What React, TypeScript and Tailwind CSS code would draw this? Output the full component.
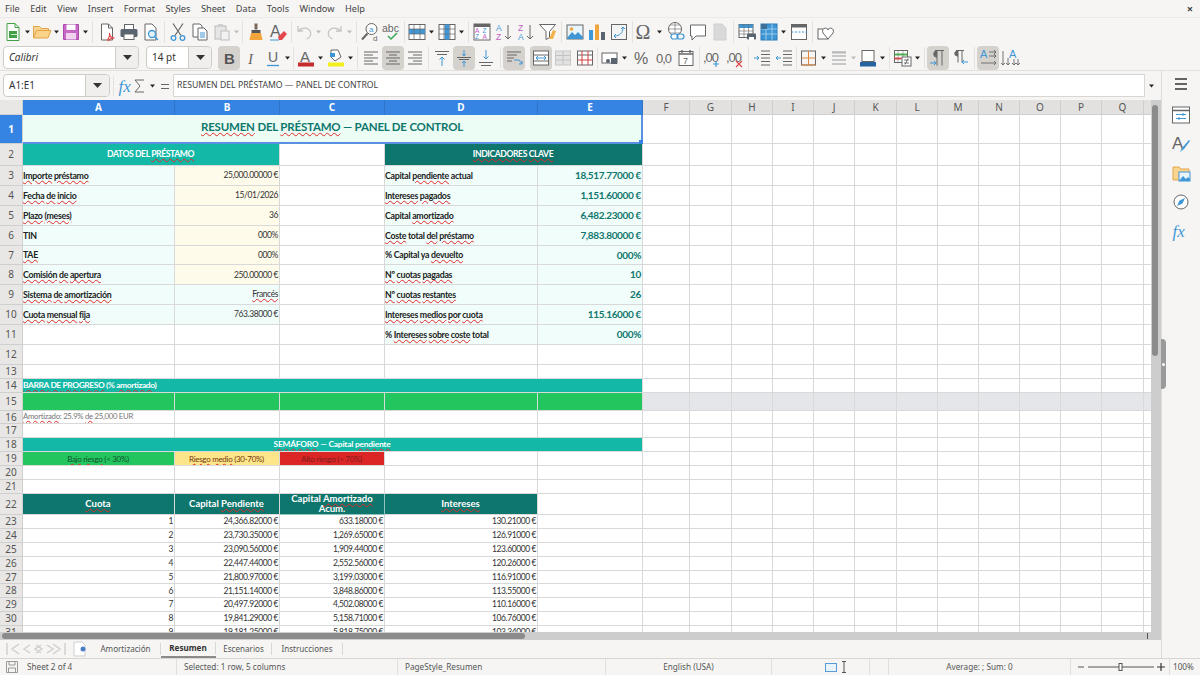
import type { ReactNode } from "react";

const dk = "#666666";
const bl = "#3f97d6";

const icons: Record<string, ReactNode> = {
  new: (<><path d="M5 2.500h8l4 4v13H5z" fill="#fff" stroke="#43a047" /><path d="M13 2.500v4h4" fill="none" stroke="#43a047" /><rect x="7" y="10" width="8" height="7" fill="#43a047" /><path d="M9 13.500h7" stroke="#c8e6c9" /></>),
  open: (<><path d="M2.500 17V5.500h6l2 2h7V10" fill="#f9d48f" stroke="#e2a54a" /><path d="M2.500 17l3-7.500H20L17 17z" fill="#fbd28a" stroke="#e2a54a" /></>),
  save: (<><path d="M3.500 3.500h15v15h-15z" fill="#c768c7" stroke="#a94ca9" /><rect x="6.500" y="3.500" width="9" height="5.500" fill="#fff" /><rect x="6" y="12" width="10" height="6.500" fill="#f1d3f1" /></>),
  pdf: (<><path d="M5.500 3h7l4 4v12h-11z" fill="#fff" stroke={dk} /><path d="M12.500 3v4h4" fill="none" stroke={dk} /><path d="M11 19c2-1 3-5 2.500-7 0 3 2 5 5 5-3 0-5 1-6.500 3" fill="none" stroke="#e04848" strokeWidth="1.200" /></>),
  print: (<><rect x="6.500" y="3.500" width="9" height="5" fill="#fff" stroke={dk} /><rect x="2.500" y="8" width="17" height="8" rx="1.500" fill="#5a6470" /><rect x="6" y="13" width="10" height="5.500" fill="#fff" stroke={dk} /></>),
  preview: (<><path d="M5 3h7l4 4v12H5z" fill="#fff" stroke={dk} /><circle cx="12" cy="13" r="3.500" fill="#e4f2fb" stroke={bl} strokeWidth="1.300" /><path d="M14.500 15.500l3.500 3.500" stroke={bl} strokeWidth="1.500" /></>),
  cut: (<><path d="M6 2.500l8 12M16 2.500l-8 12" stroke={dk} strokeWidth="1.200" /><circle cx="6.500" cy="17" r="2.300" fill="none" stroke={bl} strokeWidth="1.300" /><circle cx="15.500" cy="17" r="2.300" fill="none" stroke={bl} strokeWidth="1.300" /></>),
  copy: (<><path d="M4 3h7l2 2v11H4z" fill="#fff" stroke={dk} /><path d="M9 7h6l3 3v9H9z" fill="#fff" stroke={dk} /><path d="M11 12h5M11 14h5M11 16h5" stroke={bl} /></>),
  paste: (<><rect x="4" y="5" width="11" height="13" fill="#e6e6e6" stroke="#b9b9b9" /><rect x="7" y="3" width="5" height="3" fill="#cfcfcf" /><rect x="10" y="10" width="8" height="9" fill="#f2f2f2" stroke="#bdbdbd" /></>),
  clone: (<><path d="M9.500 2.500h3v6h-3z" fill="#7a6a5a" /><path d="M6.500 9h9v3h-9z" fill="#555" /><path d="M6 12h10l1.500 7h-13z" fill="#f3a43c" /></>),
  clear: (<><text x="3" y="16" fontSize="16" fill={dk} fontFamily="'Liberation Sans'">A</text><path d="M11 16l6-6 3 3-5 6h-3z" fill="#e4484d" /><path d="M3 19h9" stroke={bl} /></>),
  undo: (<path d="M5 5v5h5M5.500 10c3-4 10-4 12 1 1 3-1 6-4 7" fill="none" stroke="#c4c4c4" strokeWidth="1.300" />),
  redo: (<path d="M17 5v5h-5M16.500 10c-3-4-10-4-12 1-1 3 1 6 4 7" fill="none" stroke="#c4c4c4" strokeWidth="1.300" />),
  find: (<><circle cx="12.500" cy="8" r="5.500" fill="#fff" stroke={dk} /><path d="M8.500 12.500L3 18.500" stroke={dk} strokeWidth="2" /><text x="10" y="10.500" fontSize="8" fill={bl} fontFamily="'Liberation Sans'">a</text><text x="14" y="20" fontSize="8" fill={dk} fontFamily="'Liberation Sans'">d</text></>),
  spell: (<><text x="1" y="11" fontSize="10.500" fill={dk} fontFamily="'Liberation Sans'">abc</text><path d="M7 15l3 3 6-6" fill="none" stroke="#35a853" strokeWidth="1.500" /></>),
  row: (<><rect x="3" y="3.500" width="16" height="15" fill="#fff" stroke={dk} /><rect x="3" y="8" width="16" height="5" fill={bl} /><path d="M3 8h16M3 13h16M8 3.500v15M14 3.500v15" stroke={dk} strokeWidth=".7" /></>),
  col: (<><rect x="3" y="3.500" width="16" height="15" fill="#fff" stroke={dk} /><rect x="8.500" y="3.500" width="5" height="15" fill={bl} /><path d="M3 8h16M3 13h16M8 3.500v15M14 3.500v15" stroke={dk} strokeWidth=".7" /></>),
  sort: (<><rect x="3" y="3" width="16" height="16" fill="#fff" stroke={dk} /><rect x="3" y="3" width="16" height="3" fill={dk} /><text x="4" y="12" fontSize="6.500" fill="#c060c0" fontFamily="'Liberation Sans'">A</text><text x="11.500" y="12" fontSize="6.500" fill={bl} fontFamily="'Liberation Sans'">Z</text><text x="4" y="18" fontSize="6.500" fill={bl} fontFamily="'Liberation Sans'">Z</text><text x="11.500" y="18" fontSize="6.500" fill="#c060c0" fontFamily="'Liberation Sans'">A</text></>),
  asc: (<><text x="3" y="10" fontSize="8.500" fill={bl} fontFamily="'Liberation Sans'">A</text><text x="3" y="19" fontSize="8.500" fill="#c060c0" fontFamily="'Liberation Sans'">Z</text><path d="M15 4v14M12 15l3 3 3-3" fill="none" stroke={dk} /></>),
  desc: (<><text x="3" y="10" fontSize="8.500" fill="#c060c0" fontFamily="'Liberation Sans'">Z</text><text x="3" y="19" fontSize="8.500" fill={bl} fontFamily="'Liberation Sans'">A</text><path d="M15 4v14M12 15l3 3 3-3" fill="none" stroke={dk} /></>),
  filter: (<><path d="M2.500 3.500h16l-6 7v6l-3.500 2v-8z" fill="#fff" stroke={dk} /><path d="M12 18l4-9 3 1-3 8z" fill="#f3b24c" /></>),
  image: (<><rect x="3" y="4" width="16" height="14" fill="#e9f4fb" stroke={dk} /><circle cx="7.500" cy="8" r="1.800" fill="#f0a63c" /><path d="M3 17l5-6 3 3 3-3 5 5v2H3z" fill={bl} /></>),
  chart: (<><rect x="3" y="9" width="4" height="10" fill={bl} /><rect x="9" y="3.500" width="4" height="15.500" fill="#f0a63c" /><rect x="15" y="11" width="4" height="8" fill="#5a6470" /></>),
  pivot: (<><rect x="3.500" y="3.500" width="15" height="15" fill="#f4f4f4" stroke={dk} /><path d="M7 15c4 0 8-3 8-8M13 8l2-2 2 2M8 13l-2 2 2 2" fill="none" stroke={bl} /></>),
  omega: (<text x="1.500" y="18" fontSize="20" fill={dk} fontFamily="'Liberation Serif'">Ω</text>),
  link: (<><circle cx="10" cy="8" r="6.500" fill="#fff" stroke={dk} /><path d="M3.500 8h13M10 1.500v13M5 4h10M5 12h10" stroke={dk} strokeWidth=".6" /><rect x="6" y="13" width="7" height="5" rx="2.500" fill="#fff" stroke={bl} strokeWidth="1.200" /><rect x="12" y="13" width="7" height="5" rx="2.500" fill="none" stroke={bl} strokeWidth="1.200" /></>),
  comment: (<path d="M3.500 4h15v11H9l-4 4v-4H3.500z" fill="#fff" stroke={dk} />),
  headers: (<path d="M5 3h8l4 4v12H5z" fill="#d9d9d9" stroke="#cfcfcf" />),
  area: (<><rect x="3" y="3.500" width="14" height="13" fill="#fff" stroke={dk} /><rect x="3" y="3.500" width="14" height="3.500" fill={bl} /><path d="M3 10h14M3 13h14M8 3.500v13M12.500 3.500v13" stroke={dk} strokeWidth=".6" /><rect x="11" y="12.500" width="9" height="6" rx="1" fill="#5a6470" /><rect x="13" y="16" width="5" height="3" fill="#fff" /></>),
  split: (<><rect x="3" y="3" width="16" height="16" fill={bl} stroke="#2a7ab5" /><path d="M3 8h16M3 13h16M8 3v16M14 3v16" stroke="#bfe0f5" strokeWidth=".7" /><rect x="3" y="3" width="6" height="5" fill="#3d6f99" /></>),
  freeze: (<><rect x="3.500" y="3.500" width="15" height="15" fill="#fff" stroke={dk} /><rect x="3.500" y="3.500" width="15" height="3" fill={dk} /><path d="M3.500 11h15" stroke={bl} strokeDasharray="2 1.500" /></>),
  shapes: (<><rect x="3" y="8" width="10" height="10" fill="#fff" stroke={dk} /><path d="M13 18l-5-6c-2-4 3-7 5-3 2-4 7-1 5 3z" fill="#fff" stroke={dk} /></>),
  bold: (<text x="6" y="16.500" fontSize="15" fontWeight="700" fill="#555" fontFamily="'Liberation Sans'">B</text>),
  italic: (<text x="8" y="16.500" fontSize="15" fontStyle="italic" fill={dk} fontFamily="'Liberation Serif'">I</text>),
  under: (<><text x="6" y="15" fontSize="14" fill={dk} fontFamily="'Liberation Sans'">U</text><path d="M5 18.500h12" stroke={bl} strokeWidth="1.300" /></>),
  fcolor: (<><text x="5" y="14.500" fontSize="15" fill={dk} fontFamily="'Liberation Sans'">A</text><rect x="3" y="15.500" width="16" height="4" fill="#c42b2b" /></>),
  hilite: (<><path d="M6 3h7l3 7-6 4-4-4z" fill="#fff" stroke={dk} /><rect x="5" y="6" width="5" height="4" fill={bl} /><rect x="3" y="15.500" width="16" height="4" fill="#f5ee1f" /></>),
  left: (<path d="M4 5h14M4 8h9M4 11h14M4 14h9M4 17h14" stroke={dk} />),
  center: (<path d="M4 5h14M7 8h8M4 11h14M7 14h8M4 17h14" stroke={dk} />),
  right: (<path d="M4 5h14M9 8h9M4 11h14M9 14h9M4 17h14" stroke={dk} />),
  vtop: (<><path d="M4 4.500h14M6 7.500h10" stroke={dk} /><path d="M11 19v-9M8.500 12.500l2.500-2.500 2.500 2.500" fill="none" stroke={bl} /></>),
  vmid: (<><path d="M4 10.500h14M6 12.500h10" stroke={dk} /><path d="M11 3v6M9 7l2 2 2-2M11 20v-6M9 16l2-2 2 2" fill="none" stroke={bl} /></>),
  vbot: (<><path d="M4 15.500h14M6 18.500h10" stroke={dk} /><path d="M11 3v9M8.500 9.500l2.500 2.500 2.500-2.500" fill="none" stroke={bl} /></>),
  wrap: (<><path d="M4 5h14M4 8h10M4 11h7M4 14h5" stroke={dk} /><path d="M11 13h5l3 4M19 14v3h-3" fill="none" stroke={bl} /></>),
  merge: (<><rect x="3.500" y="4" width="15" height="14" fill="#fff" stroke={dk} /><path d="M3.500 8h15M3.500 14h15" stroke={dk} /><path d="M6 11h10M8 9l-2 2 2 2M14 9l2 2-2 2" fill="none" stroke={bl} /></>),
  merge2: (<><rect x="3.500" y="4" width="15" height="14" fill="#e2e2e2" stroke="#c8c8c8" /><path d="M3.500 8.500h15M3.500 13h15M11 4v14" stroke="#c2c2c2" /></>),
  split2: (<><rect x="3.500" y="4" width="15" height="14" fill="#fff" stroke={dk} /><path d="M3.500 8h15" stroke={dk} /><path d="M8 4v14M14 4v14M3.500 13h15" stroke="#d04040" /></>),
  money: (<><rect x="3" y="6" width="15" height="10" fill="#fff" stroke={dk} /><circle cx="9" cy="14" r="2" fill="#5a6470" /><rect x="12" y="11" width="6" height="6" fill="#5a6470" /></>),
  pct: (<text x="3" y="17" fontSize="16" fill={dk} fontFamily="'Liberation Sans'">%</text>),
  num: (<text x="3" y="16" fontSize="13" fill={dk} fontFamily="'Liberation Sans'" letterSpacing="-1">0,0</text>),
  date: (<><rect x="4" y="4.500" width="14" height="14" fill="#fff" stroke={dk} /><path d="M4 7h14M7 3v3M15 3v3" stroke={dk} strokeWidth="1.400" /><text x="8" y="16.500" fontSize="9" fill={dk} fontFamily="'Liberation Sans'">7</text></>),
  decadd: (<><text x="2" y="15" fontSize="13" fill={dk} fontFamily="'Liberation Sans'" letterSpacing="-1">,00</text><path d="M15 14v6M12 17h6" stroke={bl} strokeWidth="1.200" /></>),
  decdel: (<><text x="2" y="15" fontSize="13" fill={dk} fontFamily="'Liberation Sans'" letterSpacing="-1">,00</text><path d="M12 14l6 6M18 14l-6 6" stroke="#e04848" strokeWidth="1.200" /></>),
  indent: (<><path d="M10 4h9M10 7.500h9M10 11h9M10 14.500h9M10 18h9" stroke={dk} /><path d="M3 11h5M6 9l2 2-2 2" fill="none" stroke={bl} /></>),
  outdent: (<><path d="M10 4h9M10 7.500h9M10 11h9M10 14.500h9M10 18h9" stroke={dk} /><path d="M3 11h5M5 9l-2 2 2 2" fill="none" stroke={bl} /></>),
  border: (<><rect x="3.500" y="4" width="14" height="14" fill="none" stroke={dk} /><path d="M10.500 4v14M3.500 11h14M3.500 18h14" stroke="#e0863c" /></>),
  line: (<path d="M4 5h14M4 5.800h14M4 9h14M4 13h14M4 17h14" stroke="#b8b8b8" strokeWidth="1.500" />),
  bcolor: (<><rect x="5" y="3.500" width="12" height="11" fill="#fff" stroke={dk} /><rect x="3" y="15" width="16" height="4.500" fill="#26639f" /></>),
  cond: (<><rect x="2.500" y="3.500" width="13" height="12" fill="#fff" stroke={dk} /><path d="M2.500 7.500h13" stroke="#4caf50" strokeWidth="2" /><path d="M2.500 11.500h7" stroke="#e04848" strokeWidth="2" /><path d="M6 3.500v12M11 3.500v12" stroke={dk} strokeWidth=".5" /><rect x="10" y="10" width="9" height="9" fill="#fff" stroke={dk} /><path d="M12 13h5M12 16h5M16 11.500l-3 6" stroke={dk} strokeWidth=".9" /></>),
  ltr: (<><path d="M10 3.500v15M15 3.500v15M8 3.500h9" stroke={dk} /><path d="M10 3.500c-5 0-5 7 0 7" fill={dk} /><path d="M3 16h6M7 14l2 2-2 2" fill="none" stroke={bl} /></>),
  rtl: (<><path d="M9 3.500v12M13 3.500v12M7 3.500h8" stroke={dk} /><path d="M9 3.500c-5 0-5 6 0 6" fill={dk} /><path d="M13 15h6M15 13l-2 2 2 2" fill="none" stroke={bl} /></>),
  hor: (<><text x="3" y="11" fontSize="11" fill={bl} fontFamily="'Liberation Sans'">A</text><path d="M12 5h7M17 3l2 2-2 2M12 9h7M17 7l2 2-2 2M4 16h15M17 14l2 2-2 2" fill="none" stroke={dk} strokeWidth=".9" /></>),
  vert: (<><text x="10" y="11" fontSize="11" fill={bl} fontFamily="'Liberation Sans'">A</text><path d="M4 4v14M2 16l2 2 2-2M9 11v7M7 16l2 2 2-2M15 12v6M13 16l2 2 2-2M19 12v6M17 16l2 2 2-2" fill="none" stroke={dk} strokeWidth=".9" /></>),
};

const side: Record<string, ReactNode> = {
  props: (<><rect x="2.500" y="3" width="17" height="16" fill="#fff" stroke={dk} /><path d="M2.500 6.500h17" stroke={dk} strokeWidth="1.500" /><path d="M6 10.500h10M6 14.500h10" stroke={bl} /><path d="M13 9v3M9 13v3" stroke={bl} /></>),
  styles: (<><text x="2" y="16" fontSize="17" fill={dk} fontFamily="'Liberation Sans'">A</text><path d="M10 19l2-4 7-8 1 1-6 8z" fill={bl} /></>),
  gallery: (<><path d="M3 18V5h6l2 2h8v11z" fill="#f9d48f" stroke="#e2a54a" /><rect x="9" y="10" width="11" height="9" fill="#e9f4fb" stroke={bl} /><path d="M9 19l4-5 3 3 2-2 2 2v2z" fill={bl} /></>),
  nav: (<><circle cx="11" cy="11" r="7" fill="#fff" stroke={dk} /><path d="M15 7l-2.500 5.500L7 15l2.500-5.500z" fill={bl} /></>),
  fx: (<text x="2.500" y="17" fontSize="17" fontStyle="italic" fill={bl} fontFamily="'Liberation Serif'">fx</text>),
};

function Icon({ name, set = icons, className = "" }: { name: string; set?: Record<string, ReactNode>; className?: string }) {
  return (
    <svg viewBox="0 0 22 22" className={`h-[22px] w-[22px] shrink-0 ${className}`}>
      {set[name]}
    </svg>
  );
}

function Caret({ color = "#222" }: { color?: string }) {
  return (
    <svg viewBox="0 0 7 22" className="h-[22px] w-[7px] shrink-0">
      <path d="M1 9.500h5l-2.500 3z" fill={color} />
    </svg>
  );
}

// tokens: name = icon, name* = pressed, a = caret, a! = greyed caret, number = separator, _n = blank
function Tools({ items }: { items: (string | number)[] }) {
  return (
    <>
      {items.map((t, i) => {
        if (typeof t === "number")
          return (
            <div key={i} className="flex h-[22px] shrink-0 justify-center" style={{ width: t }}>
              <div className="h-full w-px bg-[#e4e2df]" />
            </div>
          );
        if (t === "a") return <Caret key={i} />;
        if (t === "a!") return <Caret key={i} color="#bbb" />;
        if (t[0] === "_") return <div key={i} className="shrink-0" style={{ width: Number(t.slice(1)) }} />;
        if (t.endsWith("*"))
          return (
            <div key={i} className="flex h-[24px] w-[22px] shrink-0 items-center justify-center rounded bg-[#d5d2ce]">
              <Icon name={t.slice(0, -1)} />
            </div>
          );
        return <Icon key={i} name={t} />;
      })}
    </>
  );
}

function Combo({ text, w, drop, italic }: { text: string; w: string; drop: string; italic?: boolean }) {
  return (
    <div className={`flex h-[23px] shrink-0 items-stretch rounded border border-[#cfccc8] bg-white ${w}`}>
      <div className={`flex flex-1 items-center pl-[5px] text-[10px] text-[#333] ${italic ? "italic" : ""}`}>{text}</div>
      <div className={`flex items-center justify-center rounded-r border-l border-[#cfccc8] bg-[#f0efed] ${drop}`}>
        <svg viewBox="0 0 9 5" className="h-[5px] w-[9px]">
          <path d="M0 0h9L4.500 5z" fill="#333" />
        </svg>
      </div>
    </div>
  );
}

// ~word~ marks what the spell check underlines
function Txt({ t }: { t: string }) {
  return (
    <>
      {t.split("~").map((s, i) =>
        i % 2 ? (
          <span key={i} className="underline decoration-[#e02a2a] decoration-wavy decoration-1 underline-offset-1">
            {s}
          </span>
        ) : (
          s
        )
      )}
    </>
  );
}

function Cell({ className = "", t }: { className?: string; t?: string }) {
  return (
    <div className={`flex min-w-0 items-center overflow-hidden whitespace-nowrap border-b border-r border-[#d9d9d9] pr-px ${className}`}>
      {t ? (
        <span>
          <Txt t={t} />
        </span>
      ) : null}
    </div>
  );
}

function RowHead({ n, on }: { n: number; on?: boolean }) {
  return (
    <div className={`flex items-center justify-center border-b border-r border-[#cfcfcf] font-['Noto_Sans',sans-serif] text-[10px] ${on ? "bg-[#3584e4] font-bold text-white" : "bg-[#e8e7e5] text-[#555]"}`}>
      {n}
    </div>
  );
}

function Blanks({ row15 }: { row15?: boolean }) {
  return (
    <>
      {Array.from({ length: 13 }, (_, i) => (
        <Cell key={i} className={row15 ? "bg-[#e4e6e9]" : "bg-white"} />
      ))}
    </>
  );
}

const lab = "bg-[#f0fdfa] text-[8.8px] font-bold tracking-[-0.3px] text-[#222]";
const val = "justify-end text-[8.5px] tracking-[-0.42px] text-[#333]";
const kpi = "justify-end bg-[#f0fdfa] text-[10px] font-bold tracking-[-0.35px] text-[#0f766e]";
const band = "bg-[#14b8a6] text-[8.4px] font-bold text-white";
const head = "justify-center border-[#8fc4bd] bg-[#0f766e] text-[9.5px] font-bold text-white";
const light = "justify-center text-[8px] tracking-[-0.3px]";

const inputs: [string, string, string][] = [
  ["~Importe~ ~préstamo~", "25,000.00000 €", "bg-[#fffbeb]"],
  ["~Fecha~ ~de~ ~inicio~", "15/01/2026", "bg-[#fffbeb]"],
  ["~Plazo~ ~(meses)~", "36", "bg-[#fffbeb]"],
  ["TIN", "000%", "bg-[#fffbeb]"],
  ["~TAE~", "000%", "bg-[#fffbeb]"],
  ["~Comisión~ ~de~ ~apertura~", "250.00000 €", "bg-[#fffbeb]"],
  ["~Sistema~ ~de~ ~amortización~", "~Francés~", "bg-[#f0fdfa]"],
  ["~Cuota~ ~mensual~ ~fija~", "763.38000 €", "bg-[#f0fdfa]"],
];

const indicators: [string, string][] = [
  ["Capital ~pendiente~ actual", "18,517.77000 €"],
  ["~Intereses~ ~pagados~", "1,151.60000 €"],
  ["Capital ~amortizado~", "6,482.23000 €"],
  ["~Coste~ total ~del~ ~préstamo~", "7,883.80000 €"],
  ["% Capital ya ~devuelto~", "000%"],
  ["~Nº~ ~cuotas~ ~pagadas~", "10"],
  ["~Nº~ ~cuotas~ ~restantes~", "26"],
  ["~Intereses~ ~medios~ ~por~ ~cuota~", "115.16000 €"],
  ["% ~Intereses~ ~sobre~ ~coste~ total", "000%"],
];

const quotas: [string, string, string][] = [
  ["24,366.82000 €", "633.18000 €", "130.21000 €"],
  ["23,730.35000 €", "1,269.65000 €", "126.91000 €"],
  ["23,090.56000 €", "1,909.44000 €", "123.60000 €"],
  ["22,447.44000 €", "2,552.56000 €", "120.26000 €"],
  ["21,800.97000 €", "3,199.03000 €", "116.91000 €"],
  ["21,151.14000 €", "3,848.86000 €", "113.55000 €"],
  ["20,497.92000 €", "4,502.08000 €", "110.16000 €"],
  ["19,841.29000 €", "5,158.71000 €", "106.76000 €"],
  ["19,181.25000 €", "5,818.75000 €", "103.34000 €"],
];

const colsOn = ["A", "B", "C", "D", "E"];
const colsOff = ["F", "G", "H", "I", "J", "K", "L", "M", "N", "O", "P", "Q", ""];

function Sheet() {
  return (
    <div className="grid min-h-0 flex-1 grid-cols-[23px_152px_105px_105px_153px_105px_47px_42px_41px_41px_41px_42px_41px_41px_41px_41px_41px_42px_8px] grid-rows-[15px_29px_22px_repeat(9,19.9px)_20px_14px_14px_18px_13px_14px_14px_14px_14px_14px_21px_repeat(9,13.9px)] overflow-hidden bg-white font-['Lato',sans-serif]">
      <div className="border-b border-r border-[#cfcfcf] bg-[#e8e7e5]" />
      {colsOn.map((c) => (
        <div key={c} className="flex items-center justify-center border-r border-[#2f74c8] bg-[#3584e4] font-['Noto_Sans',sans-serif] text-[10px] font-bold text-white">
          {c}
        </div>
      ))}
      {colsOff.map((c, i) => (
        <div key={i} className="flex items-center justify-center border-b border-r border-[#cfcfcf] bg-[#e2e1df] font-['Noto_Sans',sans-serif] text-[10px] text-[#555]">
          {c}
        </div>
      ))}

      <RowHead n={1} on />
      <div className="relative col-span-5 flex items-center justify-center border-b-2 border-r-2 border-[#5a90e2] bg-[#ecfdf5] pb-[3px] text-[11.5px] font-bold tracking-[-0.2px] text-[#0f766e]">
        <span>
          <Txt t="~RESUMEN~ DEL ~PRÉSTAMO~ — PANEL DE CONTROL" />
        </span>
        <div className="absolute -bottom-[2px] -right-[2px] h-[4px] w-[4px] bg-[#3584e4]" />
      </div>
      <Blanks />

      <RowHead n={2} />
      <Cell className="col-span-2 justify-center bg-[#14b8a6] text-[8.6px] font-bold tracking-[-0.4px] text-white" t="DATOS DEL ~PRÉSTAMO~" />
      <Cell className="bg-white" />
      <Cell className="col-span-2 justify-center bg-[#0f766e] text-[8.6px] font-bold tracking-[-0.4px] text-white" t="~INDICADORES~ ~CLAVE~" />
      <Blanks />

      {indicators.map((k, i) => (
        <div key={i} className="contents">
          <RowHead n={i + 3} />
          <Cell className={inputs[i] ? lab : "bg-white"} t={inputs[i]?.[0]} />
          <Cell className={`${val} ${inputs[i]?.[2] ?? "bg-white"}`} t={inputs[i]?.[1]} />
          <Cell className="bg-white" />
          <Cell className={lab} t={k[0]} />
          <Cell className={kpi} t={k[1]} />
          <Blanks />
        </div>
      ))}

      {[12, 13].map((n) => (
        <div key={n} className="contents">
          <RowHead n={n} />
          {[0, 1, 2, 3, 4].map((c) => (
            <Cell key={c} className="bg-white" />
          ))}
          <Blanks />
        </div>
      ))}

      <RowHead n={14} />
      <Cell className={`col-span-5 tracking-[-0.37px] ${band}`} t="~BARRA~ ~DE~ ~PROGRESO~ (% ~amortizado~)" />
      <Blanks />

      <RowHead n={15} />
      {[0, 1, 2, 3, 4].map((c) => (
        <Cell key={c} className="border-[#8fdcab] bg-[#22c55e]" />
      ))}
      <Blanks row15 />

      <RowHead n={16} />
      <Cell className="bg-white text-[7.8px] tracking-[-0.3px] text-[#777]" t="~Amortizado~: 25.9% ~de~ 25,000 EUR" />
      {[1, 2, 3, 4].map((c) => (
        <Cell key={c} className="bg-white" />
      ))}
      <Blanks />

      <RowHead n={17} />
      {[0, 1, 2, 3, 4].map((c) => (
        <Cell key={c} className="bg-white" />
      ))}
      <Blanks />

      <RowHead n={18} />
      <Cell className={`col-span-5 justify-center tracking-[-0.22px] ${band}`} t="~SEMÁFORO~ — Capital ~pendiente~" />
      <Blanks />

      <RowHead n={19} />
      <Cell className={`bg-[#22c55e] text-[#14532d] ${light}`} t="~Bajo~ ~riesgo~ (< 30%)" />
      <Cell className={`bg-[#fde68a] text-[#78350f] ${light}`} t="~Riesgo~ ~medio~ (30-70%)" />
      <Cell className={`bg-[#dc2626] text-[#7f1d1d] ${light}`} t="~Alto~ ~riesgo~ (> 70%)" />
      <Cell className="bg-white" />
      <Cell className="bg-white" />
      <Blanks />

      {[20, 21].map((n) => (
        <div key={n} className="contents">
          <RowHead n={n} />
          {[0, 1, 2, 3, 4].map((c) => (
            <Cell key={c} className="bg-white" />
          ))}
          <Blanks />
        </div>
      ))}

      <RowHead n={22} />
      <Cell className={head} t="~Cuota~" />
      <Cell className={head} t="Capital ~Pendiente~" />
      <div className="flex flex-col items-center justify-center overflow-hidden border-b border-r border-[#8fc4bd] bg-[#0f766e] text-[9.5px] font-bold leading-[10px] text-white">
        <span>
          <Txt t="Capital ~Amortizado~" />
        </span>
        <span>
          <Txt t="~Acum.~" />
        </span>
      </div>
      <Cell className={head} t="~Intereses~" />
      <Cell className="bg-white" />
      <Blanks />

      {quotas.map((q, i) => (
        <div key={i} className="contents">
          <RowHead n={i + 23} />
          <Cell className={val} t={String(i + 1)} />
          <Cell className={val} t={q[0]} />
          <Cell className={val} t={q[1]} />
          <Cell className={val} t={q[2]} />
          <Cell className="bg-white" />
          <Blanks />
        </div>
      ))}
    </div>
  );
}

const tabs = [
  { name: "Amortización", w: "w-[70px]" },
  { name: "Resumen", w: "w-[55px]", active: true },
  { name: "Escenarios", w: "w-[56px]" },
  { name: "Instrucciones", w: "w-[71px]" },
];

export default function App() {
  return (
    <div className="flex h-[675px] w-[1200px] flex-col overflow-hidden bg-[#f6f5f4] font-['Noto_Sans',sans-serif] text-[#444]">
      <div className="relative flex h-[18px] shrink-0 items-center gap-[10.5px] border-b border-[#eceae8] pl-[5px] text-[9.2px]">
        {["File", "Edit", "View", "Insert", "Format", "Styles", "Sheet", "Data", "Tools", "Window", "Help"].map((m) => (
          <span key={m}>{m}</span>
        ))}
        <span className="absolute right-[7px] top-[1px] text-[11px] font-bold text-[#444]">×</span>
      </div>

      <div className="flex h-[27px] shrink-0 items-center pl-[2px]">
        <Tools
          items={["new", "a", "open", "a", "save", "a", 6.5, "pdf", "print", "preview", 5.5, "cut", "copy", "paste", "a!", 5, "clone", "clear", 4, "undo", "a!", "_2", "redo", "a!", 6, "find", "spell", 3, "row", "a", "_1", "col", "a", 6, "sort", "asc", "desc", "filter", 5, "image", "chart", "pivot", 4, "omega", "a", "_2", "link", "comment", "headers", 5, "area", "split", "a", "_1", "freeze", 5, "shapes"]}
        />
      </div>

      <div className="flex h-[26px] shrink-0 items-center border-b border-[#e2e0dd] pl-[3px]">
        <Combo text="Calibri" w="w-[136px]" drop="w-[23px]" italic />
        <div className="w-[7px] shrink-0" />
        <Combo text="14 pt" w="w-[66px]" drop="w-[23px]" />
        <div className="w-[6px] shrink-0" />
        <Tools
          items={["bold*", "italic", "under", "a", 4, "fcolor", "a", "_1", "hilite", "a", 6, "left", "center*", "right", 5, "vtop", "vmid*", "vbot", 6, "wrap*", "_5", "merge*", "merge2", "split2", 3, "money", "a", "_3", "pct", "num", "date", 4, "decadd", "_1", "decdel", 5, "indent", "outdent", 3, "border", "a", "_1", "line", "a!", "bcolor", "a", 6, "cond", "a", 6, "ltr*", "rtl", 6, "hor*", "vert"]}
        />
      </div>

      <div className="flex min-h-0 flex-1">
        <div className="relative flex w-[1162px] shrink-0 flex-col border-r border-[#dedcd9]">
          <div className="flex h-[29px] shrink-0 items-center pl-[3px]">
            <Combo text="A1:E1" w="w-[107px]" drop="w-[24px]" />
            <div className="ml-[3px] h-[20px] w-px bg-[#e4e2df]" />
            <div className="ml-[2px] flex items-center">
              <Icon name="fx" set={side} />
              <svg viewBox="0 0 14 22" className="-ml-[6px] h-[22px] w-[14px] shrink-0">
                <path d="M12 5H3l5 6-5 6h9" fill="none" stroke={dk} />
              </svg>
              <div className="w-[2.500px] shrink-0" />
              <Caret />
              <svg viewBox="0 0 14 22" className="ml-[2.500px] h-[22px] w-[14px] shrink-0">
                <path d="M3 9h8v1H3zM3 13h8v1H3z" fill={dk} />
              </svg>
            </div>
            <div className="ml-[1px] flex h-[23px] w-[972px] shrink-0 items-center border border-[#d8d6d3] bg-white pl-[3px] text-[8.7px] text-[#444]">
              RESUMEN DEL PRÉSTAMO — PANEL DE CONTROL
            </div>
            <div className="ml-[3px]">
              <Caret />
            </div>
          </div>

          <div className="flex min-h-0 flex-1">
            <Sheet />
            <div className="w-[10px] shrink-0 bg-[#cdcdcd]">
              <div className="ml-[1px] mt-[5px] h-[251px] w-[6px] rounded-full bg-[#8b8b8b]" />
            </div>
          </div>

          <div className="flex h-[8px] shrink-0 items-center bg-[#cdcdcd]">
            <div className="ml-[2px] h-[6px] w-[523px] rounded-full bg-[#8b8b8b]" />
            <div className="ml-[622px] h-[6px] w-px bg-[#555]" />
          </div>

          <div className="flex h-[18px] shrink-0 items-stretch text-[8.1px] text-[#555]">
            <svg viewBox="0 0 62 16" className="ml-[5px] h-[16px] w-[62px] shrink-0 self-center">
              <path d="M2 2v12M14 3l-7 5 7 5M25 4l-6 4 6 4M36 4l-6 4 6 4M31 4l6 4-6 4M42 4l6 4-6 4M48 3l7 5-7 5M60 2v12" fill="none" stroke="#d0cfcd" strokeWidth="1.500" />
            </svg>
            <svg viewBox="0 0 16 16" className="ml-[5px] h-[16px] w-[16px] shrink-0 self-center">
              <path d="M2 1h8l3 3v11H2z" fill="#fff" stroke="#cfcfcf" />
              <circle cx="11" cy="8" r="2.500" fill="#4a7fc4" />
            </svg>
            <div className="ml-[3px] flex">
              {tabs.map((t) => (
                <div key={t.name} className={`flex items-center ${t.w} ${t.active ? "border-b-2 border-[#8a8a8a] font-bold text-[#333]" : ""}`}>
                  <span className="flex-1 text-center">{t.name}</span>
                  <div className="h-[12px] w-px bg-[#d8d6d3]" />
                </div>
              ))}
            </div>
          </div>

          <div className="absolute bottom-[269px] right-[-5px] flex h-[50px] w-[5px] items-center justify-center rounded-r bg-[#9a9a9a]">
            <div className="h-[3px] w-[3px] rounded-full bg-white" />
          </div>
        </div>

        <div className="flex flex-1 flex-col items-center gap-[7px]">
          <svg viewBox="0 0 22 22" className="mb-[2px] mt-[2px] h-[22px] w-[22px]">
            <path d="M5 6h12M5 11h12M5 16h12" stroke="#333" strokeWidth="1.500" />
          </svg>
          <Icon name="props" set={side} />
          <Icon name="styles" set={side} />
          <Icon name="gallery" set={side} />
          <Icon name="nav" set={side} />
          <Icon name="fx" set={side} />
        </div>
      </div>

      <div className="flex h-[17px] shrink-0 items-center border-t border-[#d8d6d3] text-[8.2px] text-[#555]">
        <div className="flex h-full w-[177px] items-center border-r border-[#e2e0dd] pl-[6px]">
          <svg viewBox="0 0 12 12" className="h-[12px] w-[12px]">
            <path d="M.5.500h11v11H.500z" fill="none" stroke="#999" />
            <path d="M3 .500h6v3.500H3zM2.500 7h7v4.500h-7z" fill="none" stroke="#999" />
          </svg>
          <span className="ml-[9px]">Sheet 2 of 4</span>
        </div>
        <div className="flex h-full w-[221px] items-center border-r border-[#e2e0dd] pl-[7px]">Selected: 1 row, 5 columns</div>
        <div className="flex h-full w-[208px] items-center border-r border-[#e2e0dd] pl-[7px]">PageStyle_Resumen</div>
        <div className="flex h-full w-[166px] items-center justify-center border-r border-[#e2e0dd]">English (USA)</div>
        <div className="flex h-full w-[98px] items-center gap-[4px] border-r border-[#e2e0dd] pl-[53px]">
          <div className="h-[9px] w-[12px] border border-[#5b9bd5] bg-[#e9f3fb]" />
          <svg viewBox="0 0 6 12" className="h-[12px] w-[6px]">
            <path d="M1 .500h4M3 .500v11M1 11.500h4" stroke="#555" fill="none" />
          </svg>
        </div>
        <div className="h-full w-[19px] border-r border-[#e2e0dd]" />
        <div className="flex h-full w-[182px] items-center justify-center border-r border-[#e2e0dd]">Average: ; Sum: 0</div>
        <div className="flex h-full w-[99px] items-center border-r border-[#e2e0dd] pl-[6px]">
          <svg viewBox="0 0 92 12" className="h-[12px] w-[92px]">
            <path d="M1 6h6M11 6h66" stroke="#555" />
            <rect x="42" y="2.500" width="3" height="7" fill="#fff" stroke="#555" />
            <path d="M80 6h8M84 2v8" stroke="#333" strokeWidth="1.200" />
          </svg>
        </div>
        <div className="pl-[3px]">100%</div>
      </div>
    </div>
  );
}
